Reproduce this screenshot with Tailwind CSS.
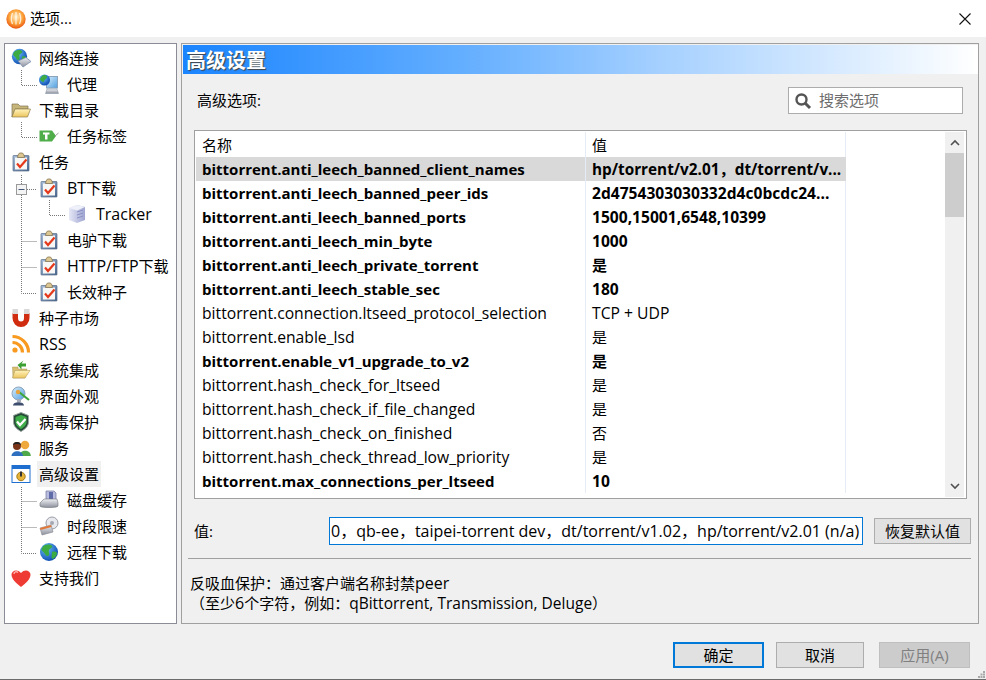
<!DOCTYPE html>
<html lang="zh">
<head>
  <meta charset="UTF-8" />
  <title>选项...</title>
  <script src="https://cdn.jsdelivr.net/npm/@tailwindcss/browser@4"></script>
</head>
<body class="m-0 bg-[#f0f0f0]">
<svg width="0" height="0" class="absolute">
  <defs>
    <radialGradient id="gGlobe" cx="35%" cy="30%" r="75%"><stop offset="0" stop-color="#6cc0f8"/><stop offset="1" stop-color="#0b49b0"/></radialGradient>
    <radialGradient id="gOrange" cx="50%" cy="40%" r="62%"><stop offset="0" stop-color="#ffeec8"/><stop offset="0.55" stop-color="#fca53c"/><stop offset="1" stop-color="#e8500c"/></radialGradient>
    <linearGradient id="gFolder" x1="0" y1="0" x2="0" y2="1"><stop offset="0" stop-color="#fff3bc"/><stop offset="1" stop-color="#ecc55c"/></linearGradient>
    <linearGradient id="gScreen" x1="0" y1="0" x2="1" y2="1"><stop offset="0" stop-color="#d8eefc"/><stop offset="1" stop-color="#4f9fe0"/></linearGradient>
    <linearGradient id="gGrey" x1="0" y1="0" x2="0" y2="1"><stop offset="0" stop-color="#eef0f4"/><stop offset="1" stop-color="#8d919c"/></linearGradient>
    <linearGradient id="gBox" x1="0" y1="0" x2="1" y2="0"><stop offset="0" stop-color="#e6e8f6"/><stop offset="1" stop-color="#9ea4d0"/></linearGradient>
    <linearGradient id="gBoard" x1="0" y1="0" x2="1" y2="1"><stop offset="0" stop-color="#a9c0dc"/><stop offset="1" stop-color="#44648e"/></linearGradient>
    <symbol id="clip" viewBox="0 0 20 20">
      <rect x="2" y="3.5" width="16" height="15.5" rx="0.5" fill="url(#gBoard)" stroke="#5c6f88" stroke-width="0.7"/>
      <rect x="4" y="5.5" width="12" height="12" fill="#f7f7f5"/>
      <path d="M6.5 5.5 L7 3 L8.5 1 L11.5 1 L13 3 L13.5 5.5 Z" fill="#dcc692" stroke="#7d6a45" stroke-width="0.7"/>
      <path d="M6 11.5 L9 15 L15.5 7.5" fill="none" stroke="#e5391c" stroke-width="2.2"/>
    </symbol>
    <symbol id="globe" viewBox="0 0 20 20">
      <circle cx="10" cy="10" r="9" fill="url(#gGlobe)"/>
      <path d="M5 3.5 C8 2 12 2 13 4 C14 6 11 6 10 8 C9 10 11 11 10 13 C9 15 7 14 6 12 C5 10 3 9 2.5 8 C2.5 6 4 4.5 5 3.5 Z M13 10 C15 9 18 10 18 11 C18 14 15 17 13 17 C12 15 13 12 13 10 Z" fill="#3bab42"/>
    </symbol>
    <symbol id="monitor" viewBox="0 0 20 20">
      <rect x="7.5" y="2.5" width="11" height="11.5" fill="url(#gScreen)" stroke="#8ca3bc"/>
      <circle cx="5.5" cy="6" r="5.5" fill="url(#gGlobe)"/>
      <path d="M3 2 C5 0 8 1 8 3 C8 5 5 5 5 8 C3 8 1 6 1 5 Z" fill="#3bab42"/>
      <path d="M8 15 H18 L19.5 19.5 H6.5 Z" fill="url(#gGrey)" stroke="#7f8ea3" stroke-width="0.5"/>
    </symbol>
  </defs>
</svg>
<div class="relative w-[986px] h-[680px] overflow-hidden flex flex-col bg-[#f0f0f0] text-black text-[15px] font-['Open_Sans','Noto_Sans_CJK_SC',sans-serif]">

  <!-- title bar -->
  <div class="h-[37px] bg-white flex items-center pl-[6px] pr-[15px]">
    <svg width="20" height="20" viewBox="0 0 20 20"><circle cx="10" cy="10" r="9.7" fill="url(#gOrange)"/><path d="M6.5 4 C5 8 5 12 6.5 15 M10 3 V15.5 M13.5 4 C15 8 15 12 13.5 15" fill="none" stroke="#fff" stroke-opacity="0.75" stroke-width="1.3"/></svg>
    <span class="ml-[4px] text-[15px] leading-none">选项...</span>
    <svg class="ml-auto" width="12" height="12" viewBox="0 0 12 12"><path d="M0.5 0.5 L11.5 11.5 M11.5 0.5 L0.5 11.5" stroke="#111" stroke-width="1.1"/></svg>
  </div>

  <div class="flex gap-[4px] pl-[4px] pt-[6px] h-[587px]">
    <!-- tree -->
    <div class="relative w-[173px] h-[581px] bg-white border border-[#8c8c96] pt-[1px]">
      <svg class="absolute left-0 top-0" width="171" height="579" viewBox="5 44 171 579" fill="none" stroke="#777" stroke-dasharray="1 1">
        <path d="M21.5 70 V85.5 H37 M21.5 122 V137.5 H37 M21.5 175 V293.5 H37 M27 189.5 H37 M21.5 241.5 H37 M21.5 267.5 H37 M49.5 200 V215.5 H65 M21.5 487 V553.5 H37 M21.5 501.5 H37 M21.5 527.5 H37"/>
        <rect x="16.5" y="184.5" width="10" height="10" fill="#f4f4f4" stroke="#9a9a9a" stroke-dasharray="none"/>
        <path d="M18.5 189.5 H24.5" stroke="#44587a" stroke-dasharray="none"/>
      </svg>
      <div class="relative flex flex-col">
        <div class="h-[26px] flex items-center pl-[6px] gap-[8px]">
          <svg width="20" height="20" viewBox="0 0 20 20"><use href="#globe" width="17" height="17"/><path d="M7 13 L15 9.5 L20 13.5 L12 19 Z" fill="url(#gGrey)" stroke="#6f86a8" stroke-width="0.7"/></svg>
          <span>网络连接</span>
        </div>
        <div class="h-[26px] flex items-center pl-[34px] gap-[8px]">
          <svg width="20" height="20"><use href="#monitor"/></svg><span>代理</span>
        </div>
        <div class="h-[26px] flex items-center pl-[6px] gap-[8px]">
          <svg width="20" height="20" viewBox="0 0 20 20"><path d="M1 4 H7 L9 6 H17 V9 H4 L1 17 Z" fill="#c7b67a" stroke="#7f7350" stroke-width="0.7"/><path d="M4 9 H19.5 L16.5 17 H1 Z" fill="url(#gFolder)" stroke="#8f8050" stroke-width="0.7"/></svg>
          <span>下载目录</span>
        </div>
        <div class="h-[26px] flex items-center pl-[34px] gap-[8px]">
          <svg width="20" height="20" viewBox="0 0 20 20"><path d="M0.5 4.5 H13 L17 10 L13 15.5 H0.5 Z" fill="#4fae4a"/><path d="M4 6.5 H10.5 V8.5 H8.5 V13.5 H6 V8.5 H4 Z" fill="#fff"/><path d="M16 10 L19.5 7" stroke="#999" stroke-width="1"/></svg>
          <span>任务标签</span>
        </div>
        <div class="h-[26px] flex items-center pl-[6px] gap-[8px]">
          <svg width="20" height="20"><use href="#clip"/></svg><span>任务</span>
        </div>
        <div class="h-[26px] flex items-center pl-[34px] gap-[8px]">
          <svg width="20" height="20"><use href="#clip"/></svg><span><span class="text-[16px]">BT</span>下载</span>
        </div>
        <div class="h-[26px] flex items-center pl-[62px] gap-[9px]">
          <svg width="20" height="20" viewBox="0 0 20 20"><path d="M2 4 L10 1 L18 3 V16 L10 19 L2 16 Z" fill="url(#gBox)"/><path d="M2 4 L10 6.5 L18 3 L10 1 Z" fill="#eef0fa"/><path d="M10 8 L16 6 M10 11 L16 9 M10 14 L16 12" stroke="#8a90c4"/></svg>
          <span class="text-[16px]">Tracker</span>
        </div>
        <div class="h-[26px] flex items-center pl-[34px] gap-[8px]">
          <svg width="20" height="20"><use href="#clip"/></svg><span>电驴下载</span>
        </div>
        <div class="h-[26px] flex items-center pl-[34px] gap-[8px]">
          <svg width="20" height="20"><use href="#clip"/></svg><span><span class="text-[16px]">HTTP/FTP</span>下载</span>
        </div>
        <div class="h-[26px] flex items-center pl-[34px] gap-[8px]">
          <svg width="20" height="20"><use href="#clip"/></svg><span>长效种子</span>
        </div>
        <div class="h-[26px] flex items-center pl-[6px] gap-[8px]">
          <svg width="20" height="20" viewBox="0 0 20 20"><path d="M1.5 5 V10 A8 8.5 0 0 0 18.5 10 V5 H13 V10 A3 3.5 0 0 1 7 10 V5 Z" fill="#cf2c10"/><rect x="1.5" y="1" width="5.5" height="5" fill="#d9d9d9"/><rect x="13" y="1" width="5.5" height="5" fill="#d9d9d9"/></svg>
          <span>种子市场</span>
        </div>
        <div class="h-[26px] flex items-center pl-[6px] gap-[8px]">
          <svg width="20" height="20" viewBox="0 0 20 20"><circle cx="4" cy="16" r="2.6" fill="#f79a1f"/><path d="M1.5 8.5 A10 10 0 0 1 11.5 18.5 M1.5 2.5 A16 16 0 0 1 17.5 18.5" fill="none" stroke="#f79a1f" stroke-width="3.2"/></svg>
          <span class="text-[16px]">RSS</span>
        </div>
        <div class="h-[26px] flex items-center pl-[6px] gap-[8px]">
          <svg width="20" height="20" viewBox="0 0 20 20"><path d="M1.5 7 H7 V9 H16 L14 18 H2 Z" fill="#d8be6e" stroke="#a8955a" stroke-width="0.5"/><path d="M4 10.5 H19 L14 18 H1.5 Z" fill="url(#gFolder)" stroke="#b5a060" stroke-width="0.6"/><path d="M12.5 0.5 L6.5 5 L10.5 9.5 L10.5 6.5 L15 6.5 L15 3.5 L10.5 3.5 Z" fill="#3c9f34"/></svg>
          <span>系统集成</span>
        </div>
        <div class="h-[26px] flex items-center pl-[6px] gap-[8px]">
          <svg width="20" height="20" viewBox="0 0 20 20"><circle cx="7.5" cy="7.5" r="6.5" fill="url(#gScreen)" stroke="#8ca3bc"/><path d="M6 13 H10 V16 H6 Z" fill="#a5acb8"/><path d="M2 19.5 C2 15 13 15 13 19.5 Z" fill="#3d4d6e"/><path d="M8 6 L18 14" stroke="#3fa63c" stroke-width="2.2"/><circle cx="7" cy="6" r="2.2" fill="#e8a33c"/></svg>
          <span>界面外观</span>
        </div>
        <div class="h-[26px] flex items-center pl-[6px] gap-[8px]">
          <svg width="20" height="20" viewBox="0 0 20 20"><path d="M10 0.5 L17.5 3.5 V10 C17.5 14.5 13.5 17.5 10 19.5 C6.5 17.5 2.5 14.5 2.5 10 V3.5 Z" fill="#264a38" stroke="#9aa5a0"/><path d="M10 3 L15.5 5 V10 C15.5 13.5 12.5 15.5 10 17 C7.5 15.5 4.5 13.5 4.5 10 V5 Z" fill="#3fae49"/><path d="M6 9.5 L9 13 L14.5 7" fill="none" stroke="#fff" stroke-width="2.2"/></svg>
          <span>病毒保护</span>
        </div>
        <div class="h-[26px] flex items-center pl-[6px] gap-[8px]">
          <svg width="20" height="20" viewBox="0 0 20 20"><path d="M8.5 18 C8.5 11 19.8 11 19.8 18 Z" fill="#4fa94a"/><circle cx="14" cy="7" r="4.3" fill="#efa83c"/><path d="M0.5 18 C0.5 11.5 12 11.5 12 18 Z" fill="#2f6fc0"/><circle cx="6" cy="8" r="4" fill="#7a3418"/><path d="M2 7 C2 3 10 3 10 7 C8 5.5 4 5.5 2 7 Z" fill="#222"/></svg>
          <span>服务</span>
        </div>
        <div class="h-[26px] flex items-center pl-[6px] gap-[6px]">
          <svg width="20" height="20" viewBox="0 0 20 20"><rect x="1" y="1.5" width="18" height="17" fill="#fff" stroke="#1f6fd0"/><rect x="1" y="1.5" width="18" height="3.5" fill="#1f6fd0"/><circle cx="10" cy="12.5" r="4.2" fill="#e5b23a" stroke="#a37b1a"/><rect x="9" y="7.5" width="2" height="5" fill="#333"/></svg>
          <span class="h-[26px] leading-[26px] px-[2px] bg-[#f0f0f0]">高级设置</span>
        </div>
        <div class="h-[26px] flex items-center pl-[34px] gap-[8px]">
          <svg width="20" height="20" viewBox="0 0 20 20"><path d="M7 1 H15 L17 3 V12 H7 Z" fill="#b8bde0" stroke="#6d7398" stroke-width="0.7"/><rect x="10" y="2" width="4" height="8" fill="#5f6ca8"/><path d="M1 13 L5 9 H18 L19 13 V16 C19 18 1 18 1 16 Z" fill="url(#gGrey)" stroke="#6f7279" stroke-width="0.6"/></svg>
          <span>磁盘缓存</span>
        </div>
        <div class="h-[26px] flex items-center pl-[34px] gap-[8px]">
          <svg width="20" height="20" viewBox="0 0 20 20"><circle cx="13" cy="7" r="6" fill="#e7e9ee" stroke="#9a9da6"/><circle cx="13" cy="7" r="2" fill="#a4a8b2"/><path d="M1 12 L12 9 L14 16 L3 19 Z" fill="url(#gGrey)" stroke="#85878e" stroke-width="0.6"/><path d="M1 12 L12 9 L12.6 11 L1.6 14 Z" fill="#e0793a"/></svg>
          <span>时段限速</span>
        </div>
        <div class="h-[26px] flex items-center pl-[34px] gap-[8px]">
          <svg width="20" height="20"><use href="#globe"/></svg><span>远程下载</span>
        </div>
        <div class="h-[26px] flex items-center pl-[6px] gap-[8px]">
          <svg width="20" height="20" viewBox="0 0 20 20"><path d="M10 19 C5 15 0.5 11 0.5 6.5 C0.5 2.5 6.5 0.5 10 5 C13.5 0.5 19.5 2.5 19.5 6.5 C19.5 11 15 15 10 19 Z" fill="#ee3b33"/><path d="M3 6 C3 4 5.5 3 7 4.5" fill="none" stroke="#ffb0a8" stroke-width="1.4"/></svg>
          <span>支持我们</span>
        </div>
      </div>
    </div>

    <!-- panel -->
    <div class="w-[798px] h-[581px] border border-[#a0a0a0] p-[1px] flex flex-col">
      <div class="h-[29px] mr-[-1px] bg-[linear-gradient(to_right,#1a84ff,#63aeff_35%,#a5d0ff_60%,#ffffff)] pl-[3px] text-white text-[20px] font-bold leading-[32px] [text-shadow:1px_1px_1px_#444]">高级设置</div>

      <div class="h-[53px] mb-[3px] flex items-center pl-[14px] pr-[14px]">
        <span>高级选项:</span>
        <div class="ml-auto w-[175px] h-[27px] bg-white border border-[#acacac] flex items-center pl-[5px] gap-[7px] text-[#6d6d6d]">
          <svg width="18" height="18" viewBox="0 0 18 18"><circle cx="7.5" cy="7.5" r="5" fill="none" stroke="#555" stroke-width="2.4"/><path d="M11 11 L16 16" stroke="#555" stroke-width="3"/></svg>
          <span>搜索选项</span>
        </div>
      </div>

      <!-- options table -->
      <div class="ml-[11px] w-[773px] h-[369px] bg-white border border-[#a0a0a0] p-[1px] flex">
        <div class="w-[748px] flex flex-col overflow-hidden">
          <div class="h-[25px] flex items-center shrink-0">
            <span class="w-[390px] h-full pl-[6px] leading-[27px] border-r border-[#e6ecf5]">名称</span>
            <span class="w-[260px] h-full pl-[6px] leading-[27px] border-r border-[#e6ecf5]">值</span>
          </div>
          <div class="flex h-[24px] w-[650px] bg-[#d9d9d9] font-bold leading-[24px]"><span class="w-[390px] pl-[6px] border-r border-[#e6ecf5]">bittorrent.anti_leech_banned_client_names</span><span class="w-[260px] pl-[6px] text-[15.3px]">hp/torrent/v2.01，dt/torrent/v...</span></div>
          <div class="flex h-[24px] font-bold leading-[24px]"><span class="w-[390px] pl-[6px] border-r border-[#e6ecf5]">bittorrent.anti_leech_banned_peer_ids</span><span class="w-[260px] pl-[6px] border-r border-[#e6ecf5] text-[15.6px]">2d4754303030332d4c0bcdc24...</span></div>
          <div class="flex h-[24px] font-bold leading-[24px]"><span class="w-[390px] pl-[6px] border-r border-[#e6ecf5]">bittorrent.anti_leech_banned_ports</span><span class="w-[260px] pl-[6px] border-r border-[#e6ecf5] text-[15.6px]">1500,15001,6548,10399</span></div>
          <div class="flex h-[24px] font-bold leading-[24px]"><span class="w-[390px] pl-[6px] border-r border-[#e6ecf5]">bittorrent.anti_leech_min_byte</span><span class="w-[260px] pl-[6px] border-r border-[#e6ecf5] text-[15.6px]">1000</span></div>
          <div class="flex h-[24px] font-bold leading-[24px]"><span class="w-[390px] pl-[6px] border-r border-[#e6ecf5]">bittorrent.anti_leech_private_torrent</span><span class="w-[260px] pl-[6px] border-r border-[#e6ecf5]">是</span></div>
          <div class="flex h-[24px] font-bold leading-[24px]"><span class="w-[390px] pl-[6px] border-r border-[#e6ecf5]">bittorrent.anti_leech_stable_sec</span><span class="w-[260px] pl-[6px] border-r border-[#e6ecf5] text-[15.6px]">180</span></div>
          <div class="flex h-[24px] leading-[24px] text-[15.7px]"><span class="w-[390px] pl-[6px] border-r border-[#e6ecf5]">bittorrent.connection.ltseed_protocol_selection</span><span class="w-[260px] pl-[6px] border-r border-[#e6ecf5]">TCP + UDP</span></div>
          <div class="flex h-[24px] leading-[24px] text-[15.7px]"><span class="w-[390px] pl-[6px] border-r border-[#e6ecf5]">bittorrent.enable_lsd</span><span class="w-[260px] pl-[6px] border-r border-[#e6ecf5] text-[15px]">是</span></div>
          <div class="flex h-[24px] font-bold leading-[24px]"><span class="w-[390px] pl-[6px] border-r border-[#e6ecf5]">bittorrent.enable_v1_upgrade_to_v2</span><span class="w-[260px] pl-[6px] border-r border-[#e6ecf5]">是</span></div>
          <div class="flex h-[24px] leading-[24px] text-[15.7px]"><span class="w-[390px] pl-[6px] border-r border-[#e6ecf5]">bittorrent.hash_check_for_ltseed</span><span class="w-[260px] pl-[6px] border-r border-[#e6ecf5] text-[15px]">是</span></div>
          <div class="flex h-[24px] leading-[24px] text-[15.7px]"><span class="w-[390px] pl-[6px] border-r border-[#e6ecf5]">bittorrent.hash_check_if_file_changed</span><span class="w-[260px] pl-[6px] border-r border-[#e6ecf5] text-[15px]">是</span></div>
          <div class="flex h-[24px] leading-[24px] text-[15.7px]"><span class="w-[390px] pl-[6px] border-r border-[#e6ecf5]">bittorrent.hash_check_on_finished</span><span class="w-[260px] pl-[6px] border-r border-[#e6ecf5] text-[15px]">否</span></div>
          <div class="flex h-[24px] leading-[24px] text-[15.7px]"><span class="w-[390px] pl-[6px] border-r border-[#e6ecf5]">bittorrent.hash_check_thread_low_priority</span><span class="w-[260px] pl-[6px] border-r border-[#e6ecf5] text-[15px]">是</span></div>
          <div class="flex h-[24px] font-bold leading-[24px]"><span class="w-[390px] pl-[6px] border-r border-[#e6ecf5]">bittorrent.max_connections_per_ltseed</span><span class="w-[260px] pl-[6px] border-r border-[#e6ecf5] text-[15.6px]">10</span></div>
        </div>
        <div class="w-[19px] bg-[#f0f0f0] flex flex-col items-center ml-[1px]">
          <svg class="mt-[7px] mb-[7px]" width="10" height="7" viewBox="0 0 10 7"><path d="M1 6 L5 2 L9 6" fill="none" stroke="#505050" stroke-width="1.6"/></svg>
          <div class="w-full h-[64px] bg-[#cdcdcd]"></div>
          <svg class="mt-auto mb-[7px]" width="10" height="7" viewBox="0 0 10 7"><path d="M1 1 L5 5 L9 1" fill="none" stroke="#505050" stroke-width="1.6"/></svg>
        </div>
      </div>

      <!-- value row -->
      <div class="flex items-center h-[28px] mt-[18px] pl-[11px] pr-[6px]">
        <span class="w-[135px]">值:</span>
        <div class="w-[535px] h-[28px] bg-white border border-[#0078d7] overflow-hidden flex justify-end items-center pr-[3px]">
          <span class="whitespace-nowrap text-[16px]">0，qb-ee，taipei-torrent dev，dt/torrent/v1.02，hp/torrent/v2.01 (n/a)</span>
        </div>
        <div class="ml-[11px] w-[97px] h-[26px] bg-[#e1e1e1] border border-[#adadad] text-center leading-[25px]">恢复默认值</div>
      </div>
      <div class="h-[1px] bg-[#a0a0a0] mt-[13px] ml-[5px] mr-[6px]"></div>
      <div class="mt-[14px] ml-[7px] leading-[20px]">
        <div>反吸血保护：通过客户端名称封禁<span class="text-[16px]">peer</span></div>
        <div>（至少<span class="text-[16px]">6</span>个字符，例如：<span class="text-[15.5px]">qBittorrent, Transmission, Deluge</span>）</div>
      </div>
    </div>
  </div>

  <!-- buttons -->
  <div class="flex items-start pt-[18px] pl-[673px]">
    <div class="w-[91px] h-[26px] bg-[#e1e1e1] border-2 border-[#0078d7] text-center leading-[23px]">确定</div>
    <div class="ml-[12px] w-[88px] h-[26px] bg-[#e1e1e1] border border-[#adadad] text-center leading-[24px]">取消</div>
    <div class="ml-[15px] w-[91px] h-[26px] bg-[#cccccc] border border-[#bfbfbf] text-[#808080] text-center leading-[24px]">应用(A)</div>
  </div>
  <svg class="absolute right-[1px] bottom-[2px]" width="7" height="7" viewBox="0 0 7 7" fill="#a8a8a8"><rect x="5" y="0" width="2" height="2"/><rect x="5" y="2.5" width="2" height="2"/><rect x="2.5" y="2.5" width="2" height="2"/><rect x="5" y="5" width="2" height="2"/><rect x="2.5" y="5" width="2" height="2"/><rect x="0" y="5" width="2" height="2"/></svg>
  <div class="absolute left-0 right-0 bottom-0 h-[1px] bg-[#6b6b6b]"></div>
</div>
</body>
</html>
